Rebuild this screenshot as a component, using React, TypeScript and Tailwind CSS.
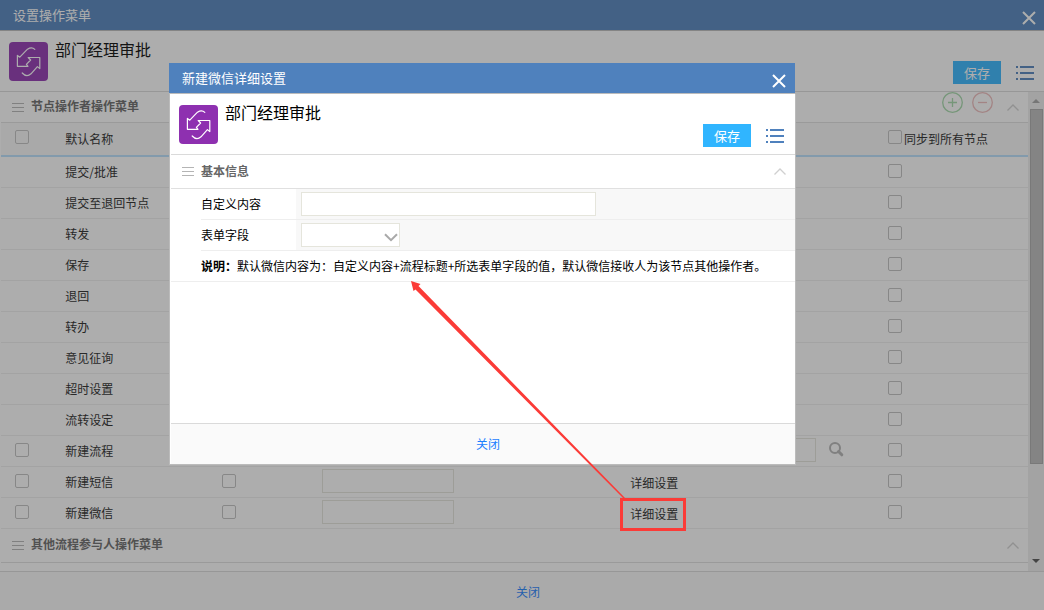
import type { ReactNode } from "react";

type Row = {
  name: string;
  selectable?: boolean;
  extra?: "search" | "detail";
};

const rows: Row[] = [
  { name: "提交/批准" },
  { name: "提交至退回节点" },
  { name: "转发" },
  { name: "保存" },
  { name: "退回" },
  { name: "转办" },
  { name: "意见征询" },
  { name: "超时设置" },
  { name: "流转设定" },
  { name: "新建流程", selectable: true, extra: "search" },
  { name: "新建短信", selectable: true, extra: "detail" },
  { name: "新建微信", selectable: true, extra: "detail" },
];

function Logo() {
  return (
    <svg width="39" height="39" viewBox="0 0 39 39" fill="none" className="shrink-0" aria-hidden="true">
      <rect width="39" height="39" rx="4" fill="#8e30b0" />
      <g stroke="#fff" strokeWidth="1.2" strokeLinecap="round" strokeLinejoin="round">
        <path d="M25.8 7.4C24 5.6 21.5 5.3 18.5 7.2L10.8 15.2L8.4 13.4V24.3H19L17.4 22.4L21.6 18L19.2 15.5H30.8V26.6L28.4 24.6L22 31.8C19 34.4 16 34 13.2 31" />
      </g>
    </svg>
  );
}

function CloseIcon() {
  return (
    <svg width="14" height="14" viewBox="0 0 14 14" stroke="#fff" strokeWidth="2" aria-hidden="true">
      <path d="M1 1L13 13M13 1L1 13" />
    </svg>
  );
}

function ListIcon() {
  return (
    <svg width="18" height="14" viewBox="0 0 18 14" fill="#4f81bd" shapeRendering="crispEdges" aria-hidden="true">
      <path d="M0 0h2v2H0zM4 0h14v2H4zM0 6h2v2H0zM4 6h14v2H4zM0 12h2v2H0zM4 12h14v2H4z" />
    </svg>
  );
}

function GripIcon() {
  return (
    <svg width="12" height="9" viewBox="0 0 12 9" fill="#b4b4b4" shapeRendering="crispEdges" aria-hidden="true">
      <path d="M0 0h12v1H0zM0 4h12v1H0zM0 8h12v1H0z" />
    </svg>
  );
}

function ChevronUp() {
  return (
    <svg width="12" height="7" viewBox="0 0 12 7" fill="none" stroke="#d0d0d0" strokeWidth="1.3" aria-hidden="true">
      <path d="M0.5 6.5L6 1L11.5 6.5" />
    </svg>
  );
}

function SearchIcon() {
  return (
    <svg width="15" height="15" viewBox="0 0 15 15" fill="none" stroke="#b4b4b4" aria-hidden="true">
      <circle cx="6" cy="6" r="5" strokeWidth="2" />
      <path d="M9.5 9.5L12.800 12.800" strokeWidth="3" strokeLinecap="round" />
    </svg>
  );
}

function RoundIcon({ color, plus }: { color: string; plus?: boolean }) {
  return (
    <svg width="21" height="21" viewBox="0 0 21 21" fill="none" stroke={color} aria-hidden="true">
      <circle cx="10.5" cy="10.5" r="9.8" strokeWidth="1.3" />
      <path d={plus ? "M6 10.5H15M10.5 6V15" : "M6 10.5H15"} strokeWidth="1.3" />
    </svg>
  );
}

function Checkbox({ label }: { label: string }) {
  return (
    <input
      type="checkbox"
      aria-label={label}
      className="block size-3.5 appearance-none rounded-[2px] border border-[#c0c0c0] bg-transparent"
    />
  );
}

function TitleBar({ title, className }: { title: string; className: string }) {
  return (
    <header
      className={`flex h-[31px] shrink-0 items-center justify-between border-b border-[#bbb] bg-[#4f81bd] pl-[13px] text-white ${className}`}
    >
      <h1 className="text-[13px] leading-5">{title}</h1>
      <button type="button" aria-label="关闭窗口" className="pt-1.5">
        <CloseIcon />
      </button>
    </header>
  );
}

function Toolbar({ className }: { className: string }) {
  return (
    <div className={`flex h-[61px] shrink-0 justify-between border-b border-[#dadada] bg-white ${className}`}>
      <div className="flex gap-[7px] pt-[11px]">
        <Logo />
        <span className="text-base leading-[14px] text-black">部门经理审批</span>
      </div>
      <div className="flex items-end gap-[15px] pb-[7px]">
        <button type="button" className="h-[23px] w-12 bg-[#30b5ff] text-[13px] leading-[23px] text-white">
          保存
        </button>
        <button type="button" aria-label="菜单" className="pb-1">
          <ListIcon />
        </button>
      </div>
    </div>
  );
}

function SectionTitle({ title, className, children }: { title: string; className: string; children?: ReactNode }) {
  return (
    <div className={`flex items-center border-b border-[#e0e0e0] pr-[9px] pl-[11px] ${className}`}>
      <GripIcon />
      <h2 className="ml-[7px] flex-1 pb-0.5 text-xs font-bold text-[#666]">{title}</h2>
      {children}
      <button type="button" aria-label="收起">
        <ChevronUp />
      </button>
    </div>
  );
}

function Scrollbar() {
  return (
    <div className="flex w-4 shrink-0 flex-col items-center bg-[#eee]">
      <svg width="8" height="17" viewBox="0 0 8 17" fill="#a3a3a3" aria-hidden="true">
        <path d="M0 11L4 7L8 11z" />
      </svg>
      <div className="h-[355px] w-[13px] border border-[#a8a8a8] bg-[#bbb]" />
      <svg width="8" height="17" viewBox="0 0 8 17" fill="#505050" className="mt-auto" aria-hidden="true">
        <path d="M0 5L4 9L8 5z" />
      </svg>
    </div>
  );
}

function MenuTable() {
  return (
    <table className="w-full table-fixed text-xs text-[#222]">
      <colgroup>
        <col className="w-[5%]" />
        <col className="w-[15%]" />
        <col className="w-[10%]" />
        <col className="w-[30%]" />
        <col className="w-[25%]" />
        <col className="w-[15%]" />
      </colgroup>
      <thead>
        <tr className="h-[33px] border-b-2 border-[#b7e0fe] bg-[#f8f8f8]">
          <th className="pb-1 pl-3.5">
            <Checkbox label="全选" />
          </th>
          <th className="pl-[13px] text-left font-normal">默认名称</th>
          <th />
          <th />
          <th />
          <th className="pl-3.5 text-left font-normal">
            <label className="flex items-center gap-0.5">
              <input
                type="checkbox"
                className="mb-1 block size-3.5 appearance-none rounded-[2px] border border-[#c0c0c0]"
              />
              同步到所有节点
            </label>
          </th>
        </tr>
      </thead>
      <tbody>
        {rows.map((row) => (
          <tr key={row.name} className="h-[31px] border-b border-[#eee]">
            <td className="pb-0.5 pl-3.5">{row.selectable && <Checkbox label={row.name} />}</td>
            <td className="pl-[13px]">{row.name}</td>
            <td className="pb-0.5 pl-4">{row.selectable && <Checkbox label={`启用${row.name}`} />}</td>
            <td className="pb-0.5 pl-[13px]">
              {row.selectable && (
                <input
                  type="text"
                  aria-label={`${row.name}自定义名称`}
                  className="block h-6 w-[132px] border border-[#e5e5dc] bg-transparent px-1"
                />
              )}
            </td>
            <td className="pl-[13px]">
              {row.extra === "detail" && (
                <a href="#detail" className="block pt-0.5">
                  详细设置
                </a>
              )}
              {row.extra === "search" && (
                <div className="flex items-center gap-[13px] pb-0.5">
                  <input
                    type="text"
                    aria-label="流程"
                    className="block h-6 w-[186px] border border-[#e5e5dc] bg-transparent px-1"
                  />
                  <button type="button" aria-label="搜索">
                    <SearchIcon />
                  </button>
                </div>
              )}
            </td>
            <td className="pb-0.5 pl-3.5">
              <Checkbox label={`同步${row.name}`} />
            </td>
          </tr>
        ))}
      </tbody>
    </table>
  );
}

function DetailDialog() {
  return (
    <div
      role="dialog"
      aria-label="新建微信详细设置"
      className="absolute top-[63px] left-[169px] flex h-[402px] w-[627px] flex-col"
    >
      <div className="pr-px">
        <TitleBar title="新建微信详细设置" className="pr-[9px]" />
      </div>
      <div className="flex flex-1 flex-col border-x border-b border-[#bbb] bg-white pl-px">
        <Toolbar className="pr-[11px] pl-2" />
        <SectionTitle title="基本信息" className="h-[34px]" />
        <div className="border-b border-[#eee] pl-[30px] text-xs text-black">
          <div className="flex h-[31px] border-b border-[#eee]">
            <label htmlFor="custom" className="w-[95px] leading-[30px]">
              自定义内容
            </label>
            <div className="flex-1 bg-[#f8f8f8] pt-[3px] pl-[5px]">
              <input
                id="custom"
                type="text"
                className="block h-6 w-[295px] border border-[#e5e5dc] bg-white px-1"
              />
            </div>
          </div>
          <div className="flex h-[31px] border-b border-[#eee]">
            <label htmlFor="field" className="w-[95px] leading-[30px]">
              表单字段
            </label>
            <div className="flex-1 bg-[#f8f8f8] pt-[3px] pl-[5px]">
              <div className="relative w-[99px]">
                <select id="field" className="block h-6 w-full appearance-none border border-[#e5e5dc] bg-white px-1">
                  <option value="" />
                </select>
                <svg
                  width="14"
                  height="9"
                  viewBox="0 0 14 9"
                  fill="none"
                  stroke="#a9a9a9"
                  strokeWidth="2"
                  className="pointer-events-none absolute top-[10px] right-0.5"
                  aria-hidden="true"
                >
                  <path d="M1 1.2L7 7.2L13 1.2" />
                </svg>
              </div>
            </div>
          </div>
          <p className="leading-[30px] whitespace-nowrap">
            <b>说明：</b>默认微信内容为：自定义内容+流程标题+所选表单字段的值，默认微信接收人为该节点其他操作者。
          </p>
        </div>
        <footer className="mt-auto flex h-[41px] items-center justify-center border-t border-[#dadada] bg-[#fafafa] pl-2.5">
          <button type="button" className="text-xs text-[#1a80ff]">
            关闭
          </button>
        </footer>
      </div>
    </div>
  );
}

function Annotation() {
  return (
    <svg
      width="280"
      height="260"
      viewBox="0 0 280 260"
      className="pointer-events-none absolute top-[275px] left-[408px]"
      aria-hidden="true"
    >
      <path d="M3 6L12.5 9L10.5 11L217 223L216 224L7.5 14.5L5.5 16z" fill="#fb3b37" />
      <rect x="213.5" y="224.5" width="63" height="30" fill="none" stroke="#fb3b37" strokeWidth="3" />
    </svg>
  );
}

export default function App() {
  return (
    <main className="relative flex h-screen flex-col overflow-hidden bg-white font-['Noto_Sans_CJK_SC',sans-serif]">
      <TitleBar title="设置操作菜单" className="pr-2" />
      <Toolbar className="pr-2.5 pl-[9px]" />
      <div className="flex min-h-0 flex-1">
        <div className="min-w-0 flex-1 overflow-hidden pl-px">
          <SectionTitle title="节点操作者操作菜单" className="h-[31px]">
            <div className="flex gap-[9px] self-start pr-3.5">
              <button type="button" aria-label="添加">
                <RoundIcon color="#a3d9a8" plus />
              </button>
              <button type="button" aria-label="删除">
                <RoundIcon color="#eebbbb" />
              </button>
            </div>
          </SectionTitle>
          <MenuTable />
          <SectionTitle title="其他流程参与人操作菜单" className="h-[34px]" />
        </div>
        <Scrollbar />
      </div>
      <footer className="flex h-[39px] shrink-0 items-center justify-center border-t border-[#dadada] bg-[#fafafa] pt-0.5 pl-3">
        <button type="button" className="text-xs text-[#1a80ff]">
          关闭
        </button>
      </footer>
      <div className="absolute inset-0 bg-[#333]/40" />
      <DetailDialog />
      <Annotation />
    </main>
  );
}
